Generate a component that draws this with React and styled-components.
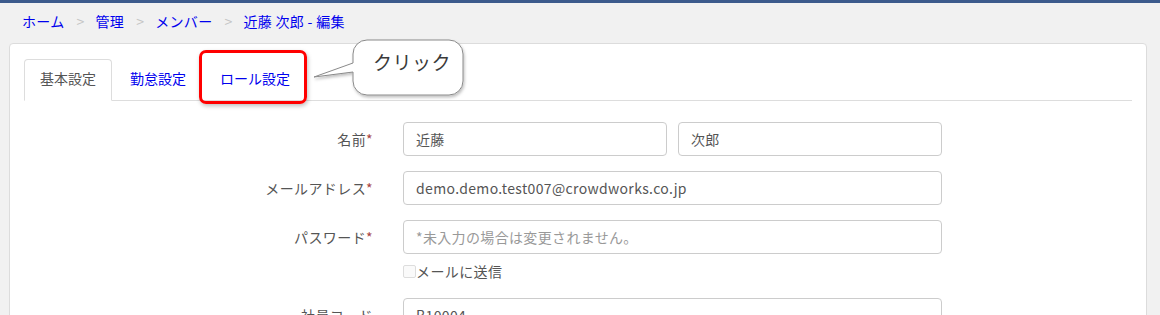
import styled, { createGlobalStyle } from "styled-components";

const GlobalStyle = createGlobalStyle`
    html, body {
        margin: 0;
        padding: 0;
        background: #f1f1f1;
        font-family: "Noto Sans CJK JP", "Noto Sans", sans-serif;
        font-size: 14px;
        color: #555;
    }
    * { box-sizing: border-box; }
`;

const Page = styled.div`
    border-top: 3px solid #3c5a8c;
    width: 1160px;
    height: 315px;
    overflow: hidden;
`;

const Crumbs = styled.ol`
    display: flex;
    align-items: center;
    list-style: none;
    margin: 0;
    padding: 0 0 4px 22px;
    height: 40px;
    line-height: 20px;
`;

const Crumb = styled.li`
    color: #0000ee;
    display: flex;
    align-items: center;
    letter-spacing: 0.3px;

    & + &::before {
        content: ">";
        color: #c4c4c4;
        padding: 0 11px 0 12px;
    }
`;

const Panel = styled.div`
    margin-left: 9px;
    width: 1138px;
    height: 400px;
    background: #fff;
    border: 1px solid #dcdcdc;
    border-radius: 4px;
    padding: 15px 14px 0;
`;

const Tabs = styled.ul`
    display: flex;
    list-style: none;
    margin: 0;
    padding: 0;
    border-bottom: 1px solid #ddd;
    height: 42px;
    position: relative;
`;

const Tab = styled.li`
    position: relative;
    height: 42px;
    margin-right: 2px;
    padding: 0 15px 4px;
    display: flex;
    align-items: center;
    border: 1px solid ${p => (p.$active ? "#ddd" : "transparent")};
    border-bottom-color: ${p => (p.$active ? "#fff" : "transparent")};
    border-radius: 4px 4px 0 0;
    background: ${p => (p.$active ? "#fff" : "transparent")};
    color: ${p => (p.$active ? "#555" : "#0000ee")};

    ${p => p.$highlight && `
        &::after {
            content: "";
            position: absolute;
            left: -6px;
            right: -2px;
            top: -10px;
            bottom: -4px;
            border: 3px solid #f00;
            border-radius: 7px;
            box-shadow: 1px 2px 4px rgba(0, 0, 0, 0.25);
        }
    `}
`;

const Callout = styled.div`
    position: absolute;
    left: 282px;
    top: -22px;
    width: 170px;
    height: 64px;
`;

const CalloutText = styled.span`
    position: absolute;
    left: 67px;
    top: 11px;
    font-size: 19px;
    line-height: 28px;
    color: #3a3a3a;
    letter-spacing: 0.5px;
`;

const Form = styled.div`
    padding-top: 21px;
    display: flex;
    flex-direction: column;
`;

const Row = styled.div`
    display: grid;
    grid-template-columns: 364px 539px;
    column-gap: 15px;
    align-items: center;
    margin-bottom: ${p => p.$gap ?? 15}px;
`;

const Label = styled.label`
    text-align: right;
    padding-right: 15px;
    color: #555;
    letter-spacing: 0.4px;
`;

const Req = styled.span`
    color: #a94442;
`;

const Fields = styled.div`
    display: flex;
    gap: 11px;
`;

const Input = styled.input`
    flex: 1;
    width: 100%;
    height: 34px;
    padding: 6px 12px;
    border: 1px solid #ccc;
    border-radius: 4px;
    font-family: inherit;
    font-size: 14px;
    letter-spacing: 0.35px;
    color: #555;
    background: #fff;
    outline: none;

    &::placeholder {
        color: #999;
    }
`;

const Check = styled.label`
    display: flex;
    align-items: center;
    color: #555;
    height: 14px;
    letter-spacing: 0.4px;
`;

const Box = styled.span`
    width: 13px;
    height: 13px;
    border: 1px solid #ddd;
    border-radius: 2px;
    background: #fafafa;
`;

function Bubble() {
    return (
        <Callout>
            <svg width="170" height="64" viewBox="0 0 170 64">
                <defs>
                    <filter id="sh" x="-10%" y="-10%" width="130%" height="140%">
                        <feDropShadow dx="1" dy="2" stdDeviation="1.5" floodColor="#000" floodOpacity="0.25" />
                    </filter>
                </defs>
                <path
                    d="M85,3 H167 A14,14 0 0 1 181,17 V44 A14,14 0 0 1 167,58 H85 A14,14 0 0 1 71,44 V35 L32,40 L71,26 V17 A14,14 0 0 1 85,3 Z"
                    transform="translate(-24,0)"
                    fill="#fff"
                    stroke="#8a8a8a"
                    strokeWidth="1"
                    filter="url(#sh)"
                />
            </svg>
            <CalloutText>クリック</CalloutText>
        </Callout>
    );
}

export default function App() {
    return (
        <>
            <GlobalStyle />
            <Page>
                <Crumbs>
                    <Crumb>ホーム</Crumb>
                    <Crumb>管理</Crumb>
                    <Crumb>メンバー</Crumb>
                    <Crumb>近藤 次郎 - 編集</Crumb>
                </Crumbs>
                <Panel>
                    <Tabs>
                        <Tab $active>基本設定</Tab>
                        <Tab>勤怠設定</Tab>
                        <Tab $highlight>ロール設定</Tab>
                        <Bubble />
                    </Tabs>
                    <Form>
                        <Row>
                            <Label>名前<Req>*</Req></Label>
                            <Fields>
                                <Input defaultValue="近藤" />
                                <Input defaultValue="次郎" />
                            </Fields>
                        </Row>
                        <Row>
                            <Label>メールアドレス<Req>*</Req></Label>
                            <Input defaultValue="demo.demo.test007@crowdworks.co.jp" />
                        </Row>
                        <Row $gap={10}>
                            <Label>パスワード<Req>*</Req></Label>
                            <Input type="password" placeholder="*未入力の場合は変更されません。" />
                        </Row>
                        <Row $gap={20}>
                            <span />
                            <Check><Box />メールに送信</Check>
                        </Row>
                        <Row>
                            <Label>社員コード</Label>
                            <Input defaultValue="B10004" />
                        </Row>
                    </Form>
                </Panel>
            </Page>
        </>
    );
}
